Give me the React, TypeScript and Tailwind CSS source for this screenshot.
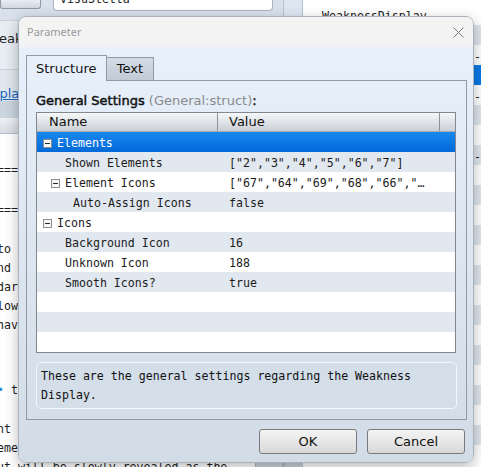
import React from 'react';

type Row = {
  label: string;
  value: string;
  level: number;
  group?: boolean;
  selected?: boolean;
};

const rows: Row[] = [
  { label: 'Elements', value: '', level: 0, group: true, selected: true },
  { label: 'Shown Elements', value: '["2","3","4","5","6","7"]', level: 1 },
  { label: 'Element Icons', value: '["67","64","69","68","66","…', level: 1, group: true },
  { label: 'Auto-Assign Icons', value: 'false', level: 2 },
  { label: 'Icons', value: '', level: 0, group: true },
  { label: 'Background Icon', value: '16', level: 1 },
  { label: 'Unknown Icon', value: '188', level: 1 },
  { label: 'Smooth Icons?', value: 'true', level: 1 },
];

// leaf rows start their text where a group's box would start + 14px
const leafIndent: Record<number, string> = {
  0: 'pl-[20px]',
  1: 'pl-[28px]',
  2: 'pl-[36px]',
};
const groupIndent: Record<number, string> = {
  0: 'pl-[6px]',
  1: 'pl-[14px]',
  2: 'pl-[22px]',
};

const mono = "font-['DejaVu_Sans_Mono',monospace]";
const ui = "font-['DejaVu_Sans',sans-serif]";

// lines of the help text sitting behind the dialog
const helpLines: { text: string; gap: string; blue?: boolean }[] = [
  { text: '=================', gap: 'mt-[27px]' },
  { text: '=================', gap: 'mt-[21px]' },
  { text: 'to show the weakness', gap: 'mt-[20px]' },
  { text: 'nd what the enemy', gap: 'mt-0' },
  { text: 'dark elements', gap: 'mt-0' },
  { text: 'lowing the player', gap: 'mt-0' },
  { text: 'have a better idea', gap: 'mt-0' },
  { text: ' the elements', gap: 'mt-[46px]', blue: true },
  { text: 'nt are unknown', gap: 'mt-[20px]' },
  { text: 'ement icons', gap: 'mt-0' },
  { text: 'ut will be slowly revealed as the', gap: 'mt-0' },
];

function MinusBox() {
  return (
    <span className="flex h-[9px] w-[9px] shrink-0 items-center justify-center border border-[#8b8d90] bg-[#f8f8f8]">
      <span className="h-px w-[5px] bg-[#2a2a2a]" />
    </span>
  );
}

function TreeRow({ row, index }: { row?: Row; index: number }) {
  const bg = row?.selected
    ? 'bg-gradient-to-b from-[#1a88f0] to-[#0069d8] text-white'
    : index % 2 === 1
      ? 'bg-[#e2e8ef] text-[#1b1b1b]'
      : 'bg-white text-[#1b1b1b]';

  return (
    <div className={`flex h-[20px] items-center pt-[3px] ${mono} text-[11.6px] ${bg}`}>
      {row && (
        <>
          <div
            className={`flex w-[181px] items-center whitespace-pre ${
              row.group ? groupIndent[row.level] : leafIndent[row.level]
            }`}
          >
            {row.group && <MinusBox />}
            <span className={row.group ? 'ml-[5px]' : ''}>{row.label}</span>
          </div>
          <div className="pl-[11px] whitespace-pre">{row.value}</div>
        </>
      )}
    </div>
  );
}

function Background() {
  return (
    <div className="flex h-full">
      <div className="flex w-[283px] flex-col">
        <div className="flex h-[20px] shrink-0 items-start">
          <div className="h-[9px] w-[41px] rounded-b-[3px] border border-t-0 border-[#8d99a6] bg-gradient-to-b from-[#e9edf2] to-[#cfd7e0]" />
          <div className="ml-[12px] h-[11px] w-[220px] overflow-hidden rounded-b-[4px] border border-t-0 border-[#a9b4c0] bg-white">
            <div className={`-mt-[9px] pl-[6px] ${mono} text-[11.6px] text-[#222]`}>VisuStella</div>
          </div>
        </div>
        <div className={`flex h-[50px] shrink-0 items-start border-y border-[#c9d2dc] bg-[#e8edf3] pt-[8px] ${ui} text-[13px] text-[#222]`}>
          <span className="-ml-[13px]">Weakness Display</span>
        </div>
        <div className={`flex h-[31px] shrink-0 items-end bg-[#e1e7ee] ${ui} text-[13px]`}>
          <span className="-mb-[2px] -ml-[21px] text-[#1565c0] underline">Display</span>
        </div>
        <div className="h-[17px] shrink-0 bg-[#cbd5e0]" />
        <div className="h-[16px] shrink-0 border-b border-[#b5bec8] bg-gradient-to-b from-[#eef1f4] to-[#d7dce2]" />
        <div className="flex min-h-0 flex-1">
          <div className={`w-[255px] overflow-hidden bg-white ${mono} text-[11.6px] text-[#1d1d1d]`}>
            {helpLines.map((l, i) => (
              <div key={i} className={`-ml-[3px] h-[19px] whitespace-pre leading-[19px] ${l.gap}`}>
                {l.blue && <span className="text-[#2a8ce0]">•</span>}
                {l.text}
              </div>
            ))}
          </div>
          <div className="flex w-[28px] flex-col justify-end bg-[#dfe6ee]">
            <div className="h-[14px] border-x border-[#aeb8c3] bg-[#cbd3dd]" />
          </div>
        </div>
      </div>
      <div className="flex w-[20px] flex-col justify-end border-x border-[#b7c3d0] bg-[#dde7f2]">
        <div className="h-[14px] border-l border-[#aeb8c3] bg-[#c9d1db]" />
      </div>
      <div className={`flex min-h-0 flex-1 flex-col overflow-hidden bg-white ${mono} text-[11.6px] text-[#1d1d1d]`}>
        <div className="h-[25px] shrink-0 pl-[19px] pt-[8px] leading-[16px]">WeaknessDisplay</div>
        {Array.from({ length: 22 }).map((_, i) => (
          <div
            key={i}
            className={`h-[20px] shrink-0 pl-[164px] leading-[24px] ${
              i === 2 ? 'bg-[#0a78e6]' : i % 2 === 0 ? 'bg-[#dfe5ec]' : 'bg-white'
            }`}
          >
            {i === 1 || i === 3 || i === 6 ? '--------' : ''}
          </div>
        ))}
      </div>
    </div>
  );
}

export default function App() {
  return (
    <div className="relative h-[467px] w-[481px] overflow-hidden bg-[#d9e2ec]">
      <Background />

      <div className="absolute left-[18px] top-[16px] flex w-[456px] flex-col overflow-hidden rounded-[8px] border border-[#a9b1ba] shadow-[0_4px_14px_rgba(0,0,0,0.28)]">
        <div className="flex h-[30px] items-center justify-between bg-[#f3f3f3] pl-[8px] pr-[9px]">
          <span className="font-['Noto_Sans',sans-serif] text-[11px] text-[#9a9a9a]">Parameter</span>
          <svg width="11" height="11" viewBox="0 0 11 11">
            <path d="M0.5 0.5L10.5 10.5M10.5 0.5L0.5 10.5" stroke="#7a7a7a" strokeWidth="1" fill="none" />
          </svg>
        </div>

        <div className={`flex flex-col bg-gradient-to-b from-[#e7f0fb] to-[#d2dce7] pb-[8px] pt-[8px] ${ui} text-[13px] text-[#111]`}>
          <div className="relative z-10 -mb-px ml-[7px] flex h-[26px] items-end">
            <div className="flex h-[26px] w-[81px] items-center border border-b-0 border-[#8e9aa7] bg-[#e6effa] pl-[9px]">
              Structure
            </div>
            <div className="flex h-[24px] w-[47px] items-center justify-center border border-l-0 border-[#8e9aa7] bg-gradient-to-b from-[#d3dce5] to-[#c2cbd5]">
              Text
            </div>
          </div>

          <div className="ml-[7px] w-[441px] border border-[#8e9aa7] px-[9px] pb-[10px] pt-[10px]">
            <div className="h-[20px] whitespace-pre leading-[20px]">
              <span className="[-webkit-text-stroke:0.45px_#111]">General Settings</span>
              <span className="text-[#8a8a8a]"> (General:struct)</span>
              <span className="[-webkit-text-stroke:0.45px_#111]">:</span>
            </div>

            <div className="mt-px w-[420px] border border-[#828790] bg-white">
              <div className="flex h-[19px] border-b border-[#a5abb1] bg-gradient-to-b from-[#f6f7f8] to-[#cbd0d6] leading-[18px]">
                <div className="w-[181px] border-r border-[#8d9297] pl-[12px]">Name</div>
                <div className="w-[222px] border-r border-[#8d9297] pl-[11px]">Value</div>
                <div className="flex-1" />
              </div>
              {Array.from({ length: 11 }).map((_, i) => (
                <TreeRow key={i} row={rows[i]} index={i} />
              ))}
            </div>

            <div className={`mt-[9px] h-[47px] rounded-[5px] border border-[#f3f6fa] bg-[#d3dee9] pl-[4px] pt-[4px] ${mono} text-[11.6px] leading-[19px] text-[#111]`}>
              These are the general settings regarding the Weakness
              <br />
              Display.
            </div>
          </div>

          <div className="mt-[9px] flex justify-end gap-[10px] pr-[8px]">
            <button className="h-[25px] w-[98px] rounded-[3px] border border-[#7b7b7b] bg-gradient-to-b from-[#f4f4f4] to-[#d8d8d8]">
              OK
            </button>
            <button className="h-[25px] w-[98px] rounded-[3px] border border-[#7b7b7b] bg-gradient-to-b from-[#f4f4f4] to-[#d8d8d8]">
              Cancel
            </button>
          </div>
        </div>
      </div>
    </div>
  );
}
